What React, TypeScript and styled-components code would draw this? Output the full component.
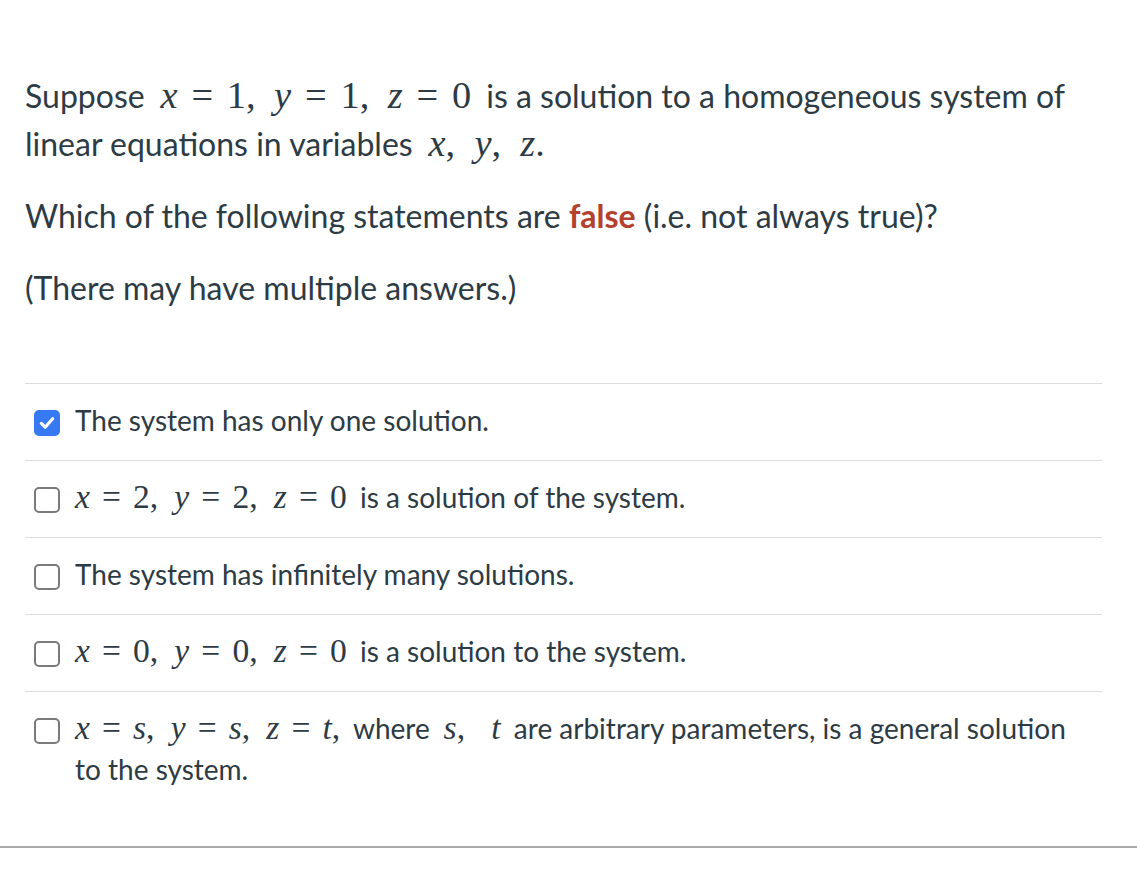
import React from "react";
import styled, { createGlobalStyle } from "styled-components";

const GlobalStyle = createGlobalStyle`
  body {
    margin: 0;
    background: #ffffff;
    font-family: Lato, "Noto Sans", sans-serif;
    color: #2d3b45;
  }
`;

const Page = styled.div`
  padding-top: 72px;
  width: 1137px;
`;

const QuestionText = styled.div`
  padding: 0 35px 0 25px;
  font-size: 32px;
  line-height: 48px;
`;

const Para = styled.p`
  margin: 0 0 24px;
`;

const Accent = styled.strong`
  color: #b4402e;
  font-weight: 700;
`;

const Formula = styled.span<{ $lead?: boolean }>`
  font-family: "Liberation Serif", "DejaVu Serif", serif;
  font-size: 1.2em;
  line-height: 1;
  white-space: nowrap;
  margin-left: ${(p) => (p.$lead ? "0.2em" : "0")};
  margin-right: 0.18em;
`;

const MathVar = styled.span`
  font-style: italic;
`;

const MathNum = styled.span`
  font-style: normal;
`;

const MathOp = styled.span`
  margin: 0 0.36em;
`;

const MathComma = styled.span<{ $gap?: number }>`
  margin-right: ${(p) => p.$gap ?? 0.48}em;
  &:last-child {
    margin-right: 0;
  }
`;

const AnswerList = styled.div`
  margin: 71px 35px 0 25px;
`;

const AnswerRow = styled.div`
  display: flex;
  align-items: flex-start;
  gap: 15px;
  border-top: 1.5px solid #dddddd;
  padding: 16px 0 19px 9px;
  font-size: 28px;
  line-height: 41px;
`;

const Box = styled.span<{ $checked: boolean }>`
  flex: 0 0 auto;
  box-sizing: border-box;
  width: 26px;
  height: 26px;
  margin-top: 9.5px;
  border-radius: 5px;
  display: flex;
  align-items: center;
  justify-content: center;
  background: ${(p) => (p.$checked ? "#3779f2" : "#ffffff")};
  border: 2px solid ${(p) => (p.$checked ? "#3779f2" : "#7a7a7a")};
`;

const AnswerLabel = styled.div`
  flex: 1;
  padding-right: 24px;
`;

const FooterRule = styled.div`
  margin-top: 37px;
  border-top: 2px solid #aaaaaa;
`;

type Answer = {
  id: number;
  checked: boolean;
  content: React.ReactNode;
};

const V = ({ children }: { children: string }) => <MathVar>{children}</MathVar>;

const Eq = ({ name, value }: { name: string; value: string }) => (
  <>
    <MathVar>{name}</MathVar>
    <MathOp>=</MathOp>
    {/^[0-9]+$/.test(value) ? <MathNum>{value}</MathNum> : <MathVar>{value}</MathVar>}
  </>
);

const Comma = ({ gap }: { gap?: number }) => <MathComma $gap={gap}>,</MathComma>;

const answers: Answer[] = [
  { id: 1, checked: true, content: "The system has only one solution." },
  {
    id: 2,
    checked: false,
    content: (
      <>
        <Formula>
          <Eq name="x" value="2" />
          <Comma />
          <Eq name="y" value="2" />
          <Comma />
          <Eq name="z" value="0" />
        </Formula>{" "}
        is a solution of the system.
      </>
    ),
  },
  { id: 3, checked: false, content: "The system has infinitely many solutions." },
  {
    id: 4,
    checked: false,
    content: (
      <>
        <Formula>
          <Eq name="x" value="0" />
          <Comma />
          <Eq name="y" value="0" />
          <Comma />
          <Eq name="z" value="0" />
        </Formula>{" "}
        is a solution to the system.
      </>
    ),
  },
  {
    id: 5,
    checked: false,
    content: (
      <>
        <Formula>
          <Eq name="x" value="s" />
          <Comma />
          <Eq name="y" value="s" />
          <Comma />
          <Eq name="z" value="t" />
          <Comma />
        </Formula>{" "}
        where{" "}
        <Formula $lead>
          <V>s</V>
          <Comma gap={0.78} />
          <V>t</V>
        </Formula>{" "}
        are arbitrary parameters, is a general solution to the system.
      </>
    ),
  },
];

const Checkbox = ({ checked }: { checked: boolean }) => (
  <Box $checked={checked}>
    {checked && (
      <svg width="18" height="18" viewBox="0 0 18 18">
        <path
          d="M3.4 9.4 L7.2 13.2 L14.6 4.8"
          fill="none"
          stroke="#ffffff"
          strokeWidth="3.2"
          strokeLinecap="round"
          strokeLinejoin="round"
        />
      </svg>
    )}
  </Box>
);

const App: React.FC = () => {
  return (
    <Page>
      <GlobalStyle />
      <QuestionText>
        <Para>
          Suppose{" "}
          <Formula $lead>
            <Eq name="x" value="1" />
            <Comma />
            <Eq name="y" value="1" />
            <Comma />
            <Eq name="z" value="0" />
          </Formula>{" "}
          is a solution to a homogeneous system of linear equations in variables{" "}
          <Formula $lead>
            <V>x</V>
            <Comma gap={0.5} />
            <V>y</V>
            <Comma gap={0.5} />
            <V>z</V>
            <MathComma>.</MathComma>
          </Formula>
        </Para>
        <Para>
          Which of the following statements are <Accent>false</Accent> (i.e. not always true)?
        </Para>
        <Para>(There may have multiple answers.)</Para>
      </QuestionText>

      <AnswerList>
        {answers.map((a) => (
          <AnswerRow key={a.id}>
            <Checkbox checked={a.checked} />
            <AnswerLabel>{a.content}</AnswerLabel>
          </AnswerRow>
        ))}
      </AnswerList>

      <FooterRule />
    </Page>
  );
};

export default App;
